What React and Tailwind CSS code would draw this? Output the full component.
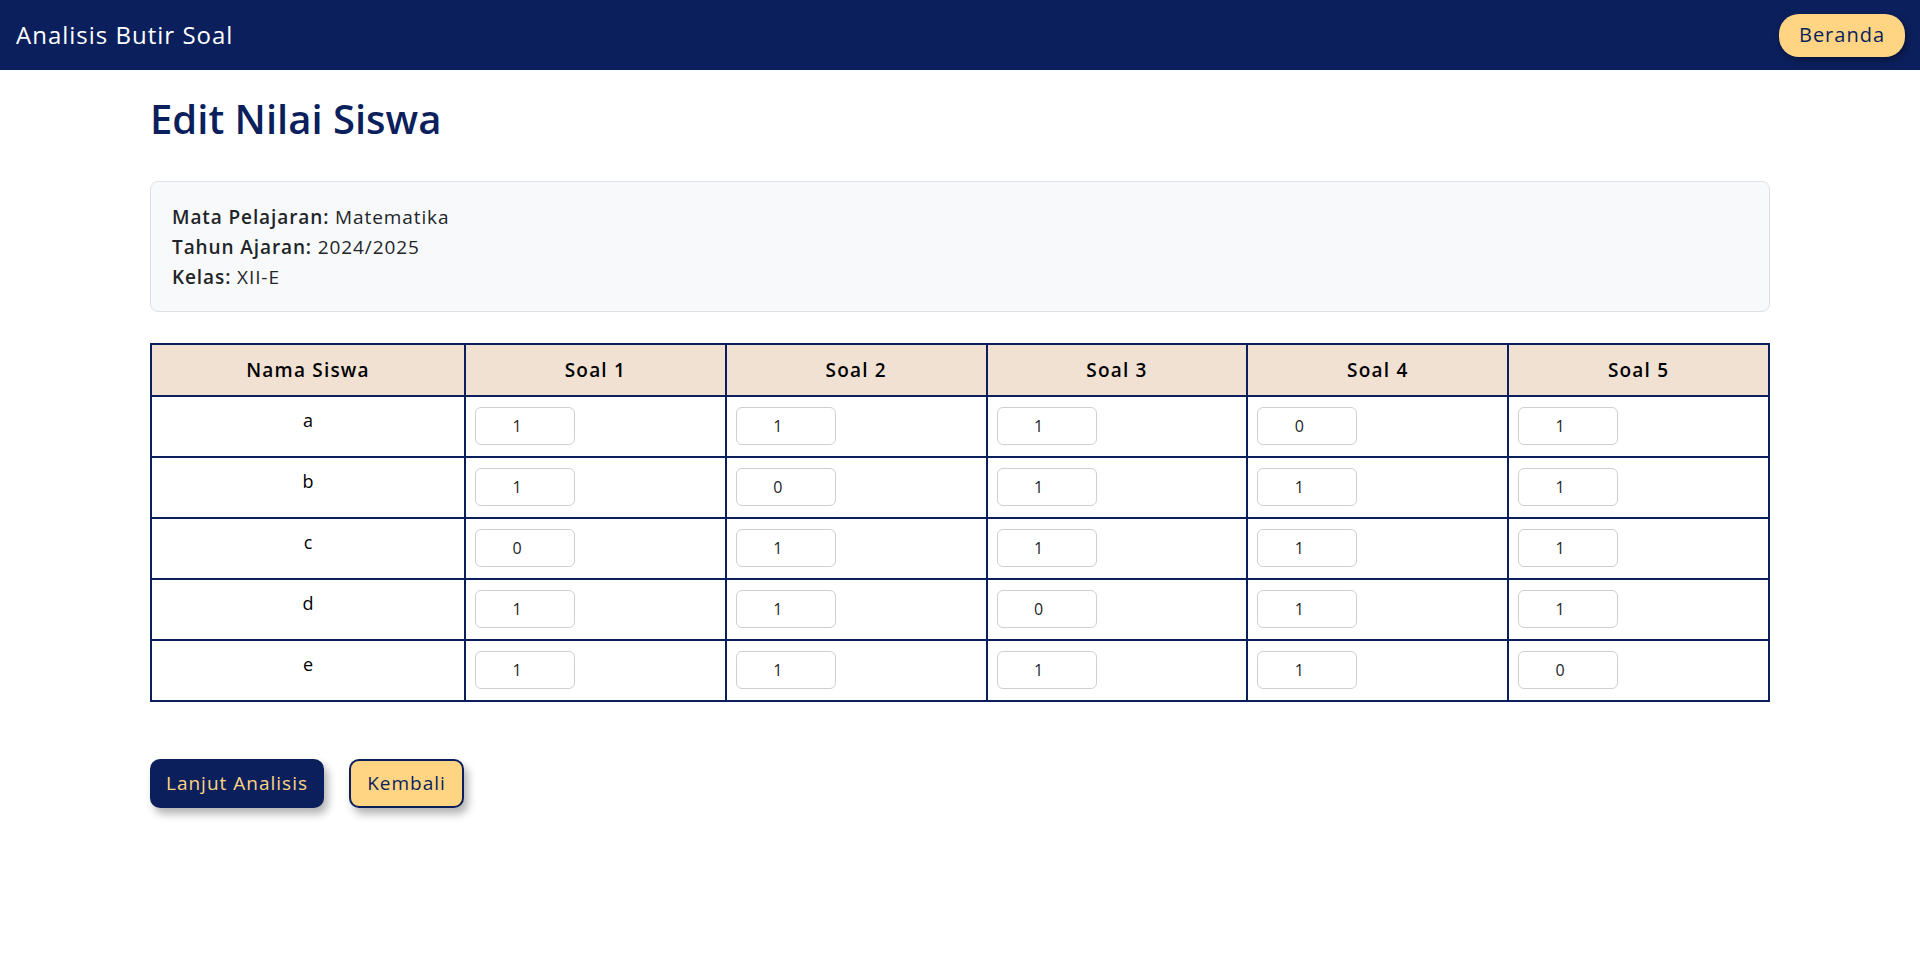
import React from 'react';

const rows = [
  { name: 'a', scores: [1, 1, 1, 0, 1] },
  { name: 'b', scores: [1, 0, 1, 1, 1] },
  { name: 'c', scores: [0, 1, 1, 1, 1] },
  { name: 'd', scores: [1, 1, 0, 1, 1] },
  { name: 'e', scores: [1, 1, 1, 1, 0] },
];

export default function App() {
  return (
    <div className="min-h-screen bg-white text-[#212529]" style={{ fontFamily: '"Open Sans", "Noto Sans", sans-serif' }}>
      <nav className="h-[70px] bg-[#0b1f5c] flex items-center justify-between pl-4 pr-[15px]">
        <span className="text-[24px] tracking-[1px] text-white">Analisis Butir Soal</span>
        <button className="h-[43px] w-[126px] rounded-[20px] bg-[#ffd583] text-[20px] tracking-[1px] text-[#0b1f5c] shadow-[2px_3px_6px_rgba(0,0,0,0.35)]">
          Beranda
        </button>
      </nav>

      <main className="w-[1620px] mx-auto">
        <h1 className="mt-[25px] text-[40px] leading-[48px] font-semibold text-[#0b1f5c]">Edit Nilai Siswa</h1>

        <div className="mt-[38px] rounded-lg border border-[#dee2e6] bg-[#f8f9fa] px-[21px] pt-[20px] pb-[19px] text-[19px] tracking-[0.9px] leading-[30px]">
          <div><span className="font-semibold">Mata Pelajaran:</span> Matematika</div>
          <div><span className="font-semibold">Tahun Ajaran:</span> 2024/2025</div>
          <div><span className="font-semibold">Kelas:</span> XII-E</div>
        </div>

        <table className="mt-[31px] w-full table-fixed border-collapse border-2 border-[#0b1f5c] text-[18px]">
          <colgroup>
            <col className="w-[314px]" />
            <col />
            <col />
            <col />
            <col />
            <col />
          </colgroup>
          <thead>
            <tr className="bg-[#f0e1d2] h-[52px]">
              <th className="border-2 border-[#0b1f5c] text-[19px] tracking-[1.2px] font-semibold text-black">Nama Siswa</th>
              {[1, 2, 3, 4, 5].map((n) => (
                <th key={n} className="border-2 border-[#0b1f5c] text-[19px] tracking-[1.2px] font-semibold text-black">Soal {n}</th>
              ))}
            </tr>
          </thead>
          <tbody>
            {rows.map((row) => (
              <tr key={row.name}>
                <td className="border-2 border-[#0b1f5c] text-center align-top pt-[10px] leading-[27px] text-black">{row.name}</td>
                {row.scores.map((s, i) => (
                  <td key={i} className="border-2 border-[#0b1f5c] px-[9px] pt-[10px] pb-[11px]">
                    <input
                      type="text"
                      defaultValue={s}
                      className="block w-[100px] h-[38px] rounded-md border border-[#cfcfcf] pl-[12px] pr-[28px] text-center text-[16px] text-[#212529] outline-none"
                    />
                  </td>
                ))}
              </tr>
            ))}
          </tbody>
        </table>

        <div className="mt-[57px] flex gap-[25px]">
          <button className="h-[49px] w-[174px] rounded-[10px] bg-[#0b1f5c] text-[19px] tracking-[1px] text-[#ffd583] shadow-[4px_6px_8px_rgba(0,0,0,0.3)]">
            Lanjut Analisis
          </button>
          <button className="h-[49px] w-[115px] rounded-[10px] border-2 border-[#0b1f5c] bg-[#ffd583] text-[19px] tracking-[1px] text-[#0b1f5c] shadow-[4px_6px_8px_rgba(0,0,0,0.3)]">
            Kembali
          </button>
        </div>
      </main>
    </div>
  );
}
